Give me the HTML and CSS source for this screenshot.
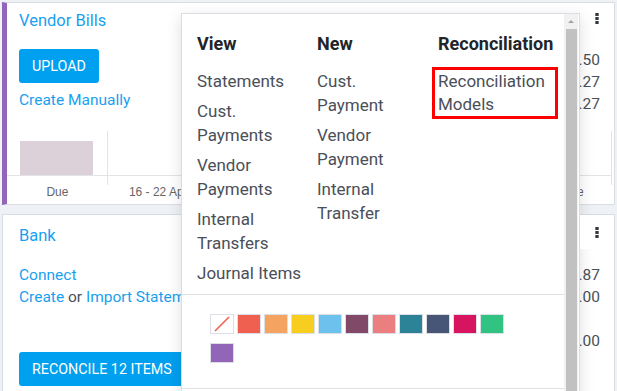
FILE: index.html
```html
<!DOCTYPE html>
<html>
<head>
<meta charset="utf-8">
<link rel="stylesheet" href="styles.css">
</head>
<body>
<div class="page">
  <section class="card card-bills">
    <div class="card-head">
      <a class="title">Vendor Bills</a>
      <span class="kebab kebab-bills"><svg width="4" height="11" viewBox="0 0 4 11"><rect x="0.3" y="0" width="3.4" height="3" rx="0.6"/><rect x="0.3" y="4" width="3.4" height="3" rx="0.6"/><rect x="0.3" y="8" width="3.4" height="3" rx="0.6"/></svg></span>
    </div>
    <div class="card-body">
      <div class="actions">
        <button class="btn">UPLOAD</button>
        <a class="link">Create Manually</a>
      </div>
      <div class="figures">
        <div>51.50</div>
        <div>80.27</div>
        <div>31.27</div>
      </div>
    </div>
    <div class="chart">
      <div class="col vl"><div class="plot"><div class="bar"></div></div><div class="tick"></div><div class="lbl">Due</div></div>
      <div class="col"><div class="plot"></div><div class="tick"></div><div class="lbl">16 - 22 Apr</div></div>
      <div class="col"><div class="plot"></div><div class="tick"></div><div class="lbl"></div></div>
      <div class="col"><div class="plot"></div><div class="tick"></div><div class="lbl"></div></div>
      <div class="col"><div class="plot"></div><div class="tick"></div><div class="lbl"></div></div>
      <div class="col vl"><div class="plot"></div><div class="tick"></div><div class="lbl">Not Due</div></div>
    </div>
  </section>

  <section class="card card-bank">
    <div class="card-head">
      <a class="title">Bank</a>
      <span class="kebab kebab-bank"><svg width="4" height="11" viewBox="0 0 4 11"><rect x="0.3" y="0" width="3.4" height="3" rx="0.6"/><rect x="0.3" y="4" width="3.4" height="3" rx="0.6"/><rect x="0.3" y="8" width="3.4" height="3" rx="0.6"/></svg></span>
    </div>
    <div class="card-body bank-body">
      <div class="actions">
        <a class="link">Connect</a>
        <div class="line"><a class="link">Create</a> or <a class="link">Import Statements</a></div>
        <button class="btn btn-rec">RECONCILE 12 ITEMS</button>
      </div>
      <div class="figures bank-figures">
        <div>80.87</div>
        <div>00.00</div>
        <div class="gap">0.00</div>
      </div>
    </div>
  </section>

  <div class="dropdown">
    <div class="dd-content">
      <div class="dd-cols">
        <div class="dd-col c1">
          <h4>View</h4>
          <a>Statements</a>
          <a>Cust. Payments</a>
          <a>Vendor Payments</a>
          <a>Internal Transfers</a>
          <a>Journal Items</a>
        </div>
        <div class="dd-col c2">
          <h4>New</h4>
          <a>Cust. Payment</a>
          <a>Vendor Payment</a>
          <a>Internal Transfer</a>
        </div>
        <div class="dd-col c3">
          <h4>Reconciliation</h4>
          <a class="hl">Reconciliation Models</a>
        </div>
      </div>
      <div class="dd-colors">
        <ul class="swatches">
          <li class="sw none"><svg width="22" height="18" viewBox="0 0 22 18"><line x1="4" y1="16" x2="18" y2="2" stroke="#f06050" stroke-width="1.6"/></svg></li>
          <li class="sw" style="background:#f06050"></li>
          <li class="sw" style="background:#f4a460"></li>
          <li class="sw" style="background:#f7cd1f"></li>
          <li class="sw" style="background:#6cc1ed"></li>
          <li class="sw" style="background:#814968"></li>
          <li class="sw" style="background:#eb7e7f"></li>
          <li class="sw" style="background:#2c8397"></li>
          <li class="sw" style="background:#475577"></li>
          <li class="sw" style="background:#d6145f"></li>
          <li class="sw" style="background:#30c381"></li>
          <li class="sw" style="background:#9365b8"></li>
        </ul>
      </div>
    </div>
    <div class="dd-scroll">
      <div class="sb-btn"><span class="sb-arrow"></span></div>
      <div class="sb-thumb"></div>
    </div>
  </div>
</div>
</body>
</html>
```

FILE: styles.css
```css
html, body {
  margin: 0;
  padding: 0;
  width: 617px;
  height: 391px;
  overflow: hidden;
}
body {
  background: #eef1f5;
  font-family: Roboto, "Noto Sans", sans-serif;
  font-size: 15.5px;
  color: #4a4f59;
}
.page {
  position: relative;
  padding: 2px;
}
.card {
  background: #fff;
  border: 1px solid #dadee4;
  box-sizing: border-box;
  display: flex;
  flex-direction: column;
}
.card-bills {
  height: 203px;
  border-left: 5px solid #9365b8;
}
.card-bank {
  margin-top: 9px;
  height: 180px;
}
.card-head {
  display: flex;
  justify-content: space-between;
  align-items: flex-start;
}
.card-bills .card-head { padding-left: 12px; }
.card-bank .card-head { padding-left: 16px; }
.title {
  color: #1a9ff0;
  font-size: 16.5px;
  line-height: 35px;
}
.card-bank .title { line-height: 41px; }
.kebab {
  width: 34px;
  height: 30px;
  display: flex;
  align-items: center;
  justify-content: center;
  background: #fff;
}
.kebab svg { fill: #353a42; }
.kebab-bank {
  height: 34px;
  position: relative;
  z-index: 5;
}
.card-body {
  display: flex;
  justify-content: space-between;
  padding: 11px 14px 0 12px;
}
.bank-body {
  padding: 8px 14px 0 16px;
}
.actions {
  display: flex;
  flex-direction: column;
  align-items: flex-start;
}
.btn {
  background: #00a0f0;
  color: #fff;
  border: 0;
  border-radius: 3px;
  height: 34px;
  padding: 0 13px;
  font-family: Roboto, sans-serif;
  font-size: 14.3px;
  margin: 0;
}
.link {
  color: #1a9ff0;
  line-height: 22px;
}
.card-bills .link { margin-top: 6px; }
.line { line-height: 22px; color: #4a4f59; white-space: nowrap; }
.btn-rec { margin-top: 44px; }
.figures {
  text-align: right;
  line-height: 22px;
  color: #4a4f59;
}
.bank-figures { margin-top: 0; }
.bank-figures .gap { margin-top: 22px; }

.chart {
  margin-top: auto;
  padding: 0 2px 5px 0;
  display: grid;
  grid-template-columns: repeat(6, 1fr);
  font-family: "Liberation Sans", Arial, sans-serif;
  font-size: 12px;
  color: #666;
}
.plot {
  height: 44px;
  border-bottom: 1px solid #e3e3e3;
  display: flex;
  align-items: flex-end;
  justify-content: center;
}
.bar {
  width: 73px;
  height: 34px;
  background: #dcd1d8;
}
.tick { height: 9px; }
.vl .plot, .vl .tick { border-right: 1px solid #e3e3e3; }
.lbl {
  text-align: center;
  line-height: 14px;
  height: 14px;
  white-space: nowrap;
}

.dropdown {
  position: absolute;
  top: 13px;
  left: 181px;
  width: 399px;
  height: 400px;
  box-sizing: border-box;
  background: #fff;
  border: 1px solid #d9dde3;
  display: flex;
  box-shadow: 0 4px 14px rgba(0, 0, 0, 0.13);
  z-index: 4;
  overflow: hidden;
}
.dd-content {
  flex: 1;
  min-width: 0;
}
.dd-cols {
  display: grid;
  grid-template-columns: 120px 121px 1fr;
  padding: 18px 0 6px 15px;
  border-bottom: 1px solid #dee2e6;
}
.dd-col h4 {
  margin: 0 0 10px;
  font-size: 18px;
  line-height: 24px;
  font-weight: 700;
  color: #212529;
  white-space: nowrap;
}
.dd-col a {
  display: block;
  padding: 3px 0;
  line-height: 24px;
  font-size: 17px;
  color: #4a4f59;
}
.c1 a, .c2 a { width: 105px; }
.dd-col a.hl {
  outline: 3px solid #ff0000;
  width: 117px;
  margin: 14px 0 0 -3px;
  padding: 0 0 0 3px;
  line-height: 23px;
}
.dd-colors {
  padding: 19px 0 25px 28px;
  border-bottom: 1px solid #dee2e6;
}
.swatches {
  list-style: none;
  margin: 0;
  padding: 0;
  width: 300px;
  display: flex;
  flex-wrap: wrap;
  gap: 9px 3px;
}
.sw {
  width: 24px;
  height: 20px;
  box-sizing: border-box;
  border: 1px solid #dcdfe5;
}
.sw.none { background: #fff; }
.sw svg { display: block; }

.dd-scroll {
  width: 14px;
  margin-right: 1px;
  background: #f1f1f1;
  display: flex;
  flex-direction: column;
}
.sb-btn {
  height: 15px;
  display: flex;
  align-items: center;
  justify-content: center;
}
.sb-arrow {
  width: 0;
  height: 0;
  border-left: 3px solid transparent;
  border-right: 3px solid transparent;
  border-bottom: 3px solid #a3a3a3;
}
.sb-thumb {
  flex: 1;
  margin: 0 1px 0 2px;
  background: #c1c1c1;
}
```
